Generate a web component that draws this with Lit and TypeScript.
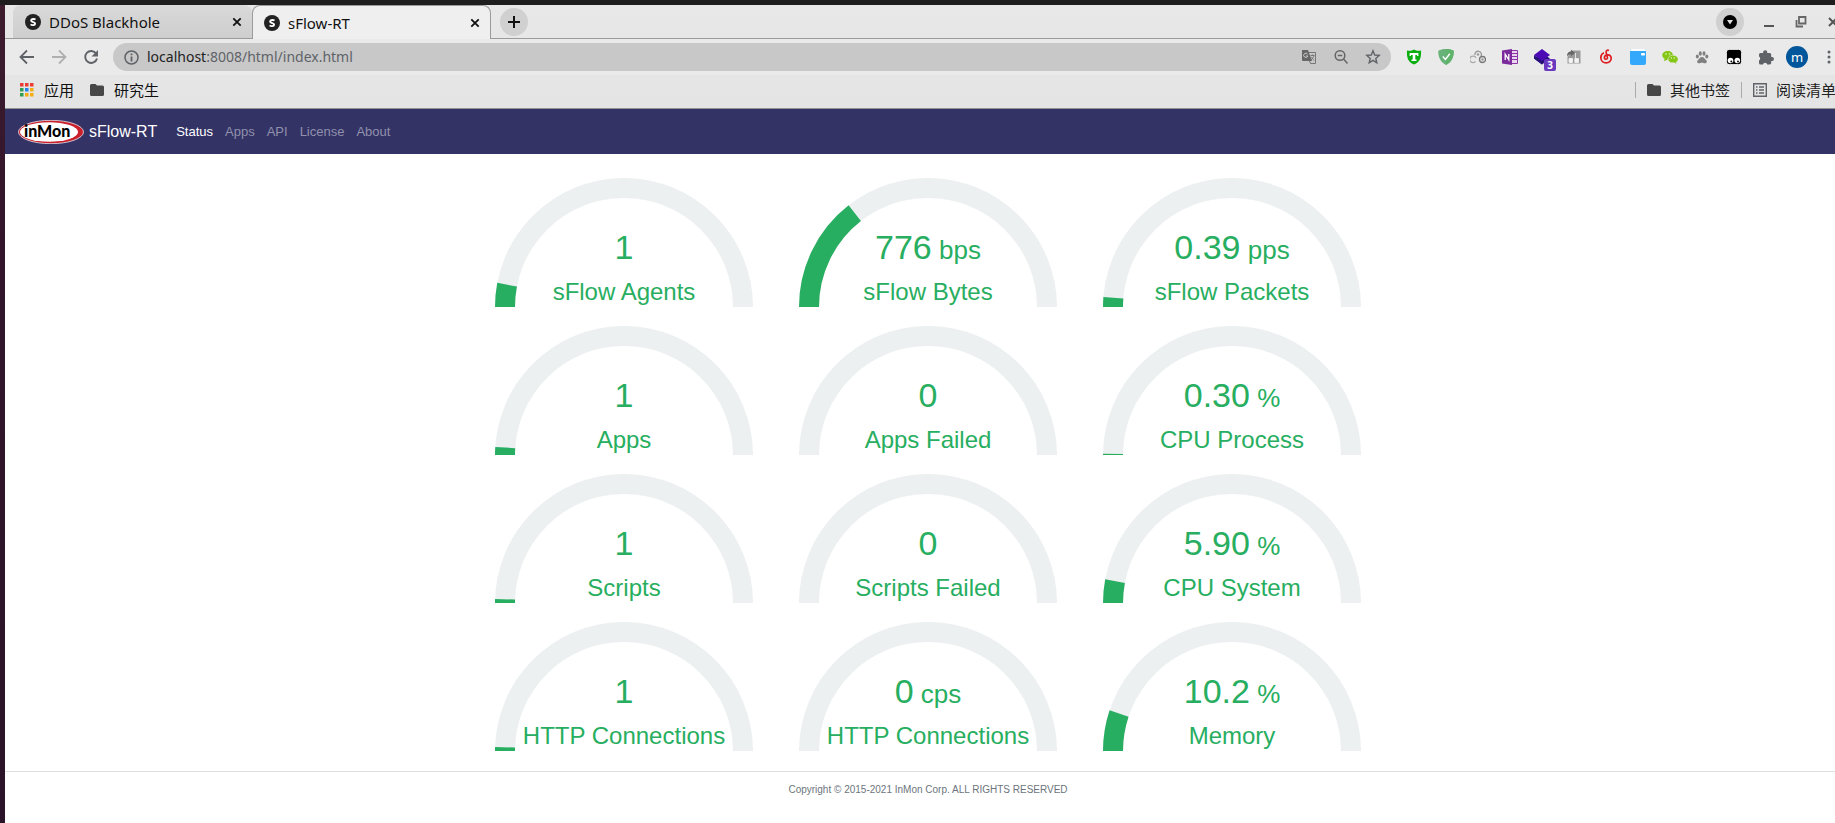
import { LitElement, html, svg, css, nothing } from "lit";
import { customElement, property } from "lit/decorators.js";

@customElement("status-gauge")
class StatusGauge extends LitElement {
  @property({ type: Number }) fraction = 0;
  @property() value = "";
  @property() unit = "";
  @property() label = "";

  static styles = css`
    :host { display: grid; color: #27ae60; text-align: center; }
    .dial { grid-area: 1 / 1; display: block; width: 100%; }
    .text { grid-area: 1 / 1; align-self: end; }
    .value { font-size: 34px; line-height: 40px; }
    .unit { font-size: 26px; line-height: 26px; white-space: pre; }
    .label { font-size: 24px; line-height: 30px; padding-top: 10px; white-space: nowrap; }
  `;

  private arc(f: number) {
    const a = Math.PI * (1 - f);
    const x = (r: number) => (129 + r * Math.cos(a)).toFixed(2);
    const y = (r: number) => (129 - r * Math.sin(a)).toFixed(2);
    return `M0 129A129 129 0 0 1 ${x(129)} ${y(129)}L${x(109)} ${y(109)}A109 109 0 0 0 20 129Z`;
  }

  render() {
    return html`
      <svg class="dial" viewBox="0 0 258 129" aria-hidden="true">
        <path d=${this.arc(1)} fill="#ecf0f1" />
        ${this.fraction > 0 ? svg`<path d=${this.arc(this.fraction)} fill="#27ae60" />` : nothing}
      </svg>
      <div class="text">
        <div class="value">${this.value}${this.unit ? html`<span class="unit"> ${this.unit}</span>` : nothing}</div>
        <div class="label">${this.label}</div>
      </div>
    `;
  }
}

const siteMark = html`<svg width="16" height="16" viewBox="0 0 16 16" aria-hidden="true">
  <circle cx="8" cy="8" r="8" fill="#222" />
  <path d="M10.4 5.6C9.6 4.7 6.2 4.5 6.1 6.5c0 2 4.1 1.2 4 3.1-.1 2-3.400 1.800-4.400.7" fill="none" stroke="#fff" stroke-width="1.900" />
</svg>`;

const closeMark = html`<svg width="10" height="10" viewBox="0 0 10 10" aria-hidden="true">
  <path d="M1.300 1.300l7.400 7.400M8.700 1.300L1.300 8.700" stroke="#111" stroke-width="1.800" />
</svg>`;

const folder = html`<svg width="14" height="14" viewBox="0 0 14 14" aria-hidden="true">
  <path d="M1.500 1h4l1.500 1.500h5.500A1.500 1.500 0 0 1 14 4v7.500a1.500 1.500 0 0 1-1.500 1.500h-11A1.500 1.500 0 0 1 0 11.500v-9A1.500 1.500 0 0 1 1.500 1z" fill="#474747" />
</svg>`;

const apps = html`<svg width="14" height="14" viewBox="0 0 14 14" aria-hidden="true">
  <path d="M0 0h3.500v3.500H0zM5 0h3.500v3.500H5zM10 0h3.500v3.500H10z" fill="#ea3c33" />
  <path d="M0 5h3.500v3.500H0zM0 10h3.500v3.500H0z" fill="#2f9e4f" />
  <path d="M5 5h3.500v3.500H5z" fill="#2383ea" />
  <path d="M10 5h3.500v3.500H10zM5 10h3.500v3.500H5zM10 10h3.500v3.500H10z" fill="#f4ad13" />
</svg>`;

const extensions = [
  { name: "T shield", art: svg`<path d="M8 .5C10 2 12.500 2 15 1.600c.4 7-.8 11.400-7 14-6.200-2.600-7.400-7-7-14C3.500 2 6 2 8 .5z" fill="#0bae0f"/><path d="M3.600 4h8.800v3H11V6H9.300v4.600h1.200V12h-5v-1.400h1.200V6H5v1H3.600z" fill="#fff"/>` },
  { name: "Ad guard", art: svg`<path d="M8 0c3 0 5.600.6 7.700 1.700C15.800 8.500 13.500 13 8 16 2.500 13 .2 8.500.3 1.700 2.400.6 5 0 8 0z" fill="#67b279"/><path d="M8 0c3 0 5.600.6 7.700 1.700C15.800 8.500 13.500 13 8 16z" fill="#5fb36a"/><path d="M4.800 7.600l2.600 2.800 4.400-5.600" fill="none" stroke="#fff" stroke-width="1.500"/>` },
  { name: "Rings", art: svg`<g fill="none" stroke-width="1.300"><path d="M4.900 6.200a3.300 3.300 0 1 1 6 1.200" stroke="#999"/><path d="M5.500 12.500A3.300 3.300 0 1 1 6 9" stroke="#aaa"/><circle cx="12.500" cy="10.500" r="3" stroke="#777"/></g><g fill="#999"><circle cx="8" cy="5.500" r="1.200"/><circle cx="12.500" cy="10.500" r="1.200"/></g>` },
  { name: "Notes", art: svg`<path d="M9 1.500h6.500v13H9z" fill="#ead7ef" stroke="#8b35a8"/><path d="M9 4.500h6M9 7.500h6M9 10.500h6" stroke="#8b35a8"/><path d="M0 1.500L10 0v16L0 14.500z" fill="#7b2a9b"/><path d="M3.200 11V5.200l3.600 5.600V5" fill="none" stroke="#fff" stroke-width="1.300"/>` },
  { name: "Layers", badge: "3", art: svg`<path d="M0 9.500l8 6 8-6-8-5z" fill="#27127c"/><path d="M0 6l8-6 8 6-8 6z" fill="#4b0ab5"/><path d="M0 6v3.500l8 6V12z" fill="#27127c"/>` },
  { name: "Library", art: svg`<path d="M5 1.500h9.500v13H1.500V8z" fill="#999"/><path d="M1 7.500C1 3.500 3 2.500 5 2.500V.8L9 4 5 7V5.200C3 5.200 2 6 1 7.500z" fill="#666"/><path d="M3 9.500h3.500v4H3zM8.800 9.500h3.700v4H8.800zM9.500 4v5" stroke="#f4f4f4" stroke-width=".8" fill="#f4f4f4"/>` },
  { name: "Music", art: svg`<path d="M11 1.500C9.400.6 7.800 1.800 8.200 3.600l1.200 4.800c.5 2.300-3.200 2.500-3 .2C6.600 5.400 12.600 4.300 13.200 9 13.600 15.300 2.900 15.800 2.800 8.800 2.800 6.200 4.200 4.500 6 3.800" fill="none" stroke="#dc2023" stroke-width="1.700"/>` },
  { name: "Window", art: svg`<path d="M0 1.500A1.500 1.500 0 0 1 1.500 0h13A1.500 1.500 0 0 1 16 1.500V14a2 2 0 0 1-2 2H2a2 2 0 0 1-2-2z" fill="#34a9fb"/><path d="M0 2V1.500A1.500 1.500 0 0 1 1.500 0h13A1.500 1.500 0 0 1 16 1.500V2z" fill="#f8fbff"/><rect x="11" y="4" width="4" height="2.500" rx="1" fill="#fff"/>` },
  { name: "Chat", art: svg`<path d="M5.700 2C9 2 11 4 11 6.300S9 10.500 5.700 10.500L2 12.200l.6-2.600C-1.800 7 .5 2 5.700 2z" fill="#85c714"/><path d="M10.600 6.200c6 0 7 5.200 3.600 7l.4 1.800-2.500-1.200C8 14.300 6 12 6.100 10c0-2 1.900-3.800 4.500-3.800z" fill="#85c714" stroke="#e6e6e6" stroke-width=".6"/><g fill="#e8f5d0"><circle cx="4" cy="5" r=".8"/><circle cx="7.500" cy="5" r=".8"/><circle cx="9.300" cy="9" r=".7"/><circle cx="12.300" cy="9" r=".7"/></g>` },
  { name: "Paw", art: svg`<g fill="#808080"><ellipse cx="3.300" cy="7.500" rx="1.500" ry="2"/><ellipse cx="6.300" cy="4.500" rx="1.500" ry="2.200"/><ellipse cx="10" cy="4.500" rx="1.500" ry="2.200"/><ellipse cx="12.800" cy="7.500" rx="1.500" ry="2"/><path d="M8 8c2 0 2.500 1.800 4 3s.8 3.300-1 3.300c-1.200 0-1.800-.6-3-.6s-1.800.6-3 .6c-1.800 0-2.500-2-1-3.300S6 8 8 8z"/></g>` },
  { name: "Scripts", art: svg`<rect x=".3" y=".3" width="15.400" height="15.400" rx="3" fill="#000" stroke="#fff"/><circle cx="4.500" cy="11.500" r="2.800" fill="#fff"/><circle cx="11.300" cy="11.500" r="2.800" fill="#fff"/><circle cx="5.300" cy="12.500" r=".9"/><circle cx="12" cy="12.500" r=".9"/>` },
  { name: "Extensions", art: svg`<path d="M1 5.500A1.500 1.500 0 0 1 2.500 4H5.200a2.100 2.100 0 1 1 4 0h2.600a1.500 1.500 0 0 1 1.400 1.500V8a2.100 2.100 0 1 1 0 4v2a1.500 1.500 0 0 1-1.400 1.500H9.300a2.300 2.300 0 0 0-4.400 0H2.500A1.500 1.500 0 0 1 1 14v-2.500a2.300 2.300 0 0 0 0-4z" fill="#5f6368"/>` },
];

const gauges = [
  { value: "1", unit: "", label: "sFlow Agents", fraction: 0.06 },
  { value: "776", unit: "bps", label: "sFlow Bytes", fraction: 0.289 },
  { value: "0.39", unit: "pps", label: "sFlow Packets", fraction: 0.025 },
  { value: "1", unit: "", label: "Apps", fraction: 0.02 },
  { value: "0", unit: "", label: "Apps Failed", fraction: 0 },
  { value: "0.30", unit: "%", label: "CPU Process", fraction: 0.003 },
  { value: "1", unit: "", label: "Scripts", fraction: 0.01 },
  { value: "0", unit: "", label: "Scripts Failed", fraction: 0 },
  { value: "5.90", unit: "%", label: "CPU System", fraction: 0.059 },
  { value: "1", unit: "", label: "HTTP Connections", fraction: 0.01 },
  { value: "0", unit: "cps", label: "HTTP Connections", fraction: 0 },
  { value: "10.2", unit: "%", label: "Memory", fraction: 0.102 },
];

@customElement("app-root")
class AppRoot extends LitElement {
  static styles = css`
    :host {
      display: block; box-sizing: border-box; min-height: 100vh; overflow: hidden;
      padding: 5px 0 0 5px; font-family: "Liberation Sans", Arial, sans-serif;
      background: linear-gradient(#1e1e1e, #1e1e1e) 0 0 / 100% 5px no-repeat, linear-gradient(#3d1c2e, #32152b 30%, #2b1429);
    }
    * { box-sizing: border-box; }
    button { border: 0; padding: 0; margin: 0; background: none; font: inherit; color: inherit; display: grid; place-items: center; flex: none; }
    a { color: inherit; text-decoration: none; }
    svg { display: block; flex: none; }
    /* The window is wider than the visible desktop and runs off its right edge. */
    .window { margin-right: -16px; min-height: calc(100vh - 5px); background: #fff; }
    .chrome { background: linear-gradient(#e8e8e8, #e4e4e4); border-bottom: 1px solid #91928f; font-family: "Noto Sans", "Noto Sans CJK SC", sans-serif; font-size: 14px; color: #111; }
    .tabs { display: flex; height: 34px; padding-left: 8px; box-shadow: inset 0 -1px #9b9b9b; font-size: 15px; }
    .tab { display: flex; align-items: center; width: 239px; padding: 0 10px 0 12px; gap: 8px; border-radius: 8px 8px 0 0; background: linear-gradient(#d9d9d9, #cecece); border-bottom: 1px solid #9b9b9b; }
    .tab.active { background: #efefef; border: 1px solid #9b9b9b; border-bottom: 0; padding: 0 10px 0 11px; }
    .tab a { flex: 1; line-height: 20px; }
    .new { width: 28px; height: 28px; border-radius: 50%; background: #d0d0d0; margin: 3px 0 0 9px; }
    .controls { display: flex; align-items: center; margin-left: auto; padding-right: 8px; }
    .menu { width: 28px; height: 28px; border-radius: 50%; background: #d0d0d0; margin-right: 19px; }
    .ctl { width: 12px; margin-right: 20px; }
    .ctl:last-child { margin-right: 4px; }
    .toolbar { display: flex; align-items: center; height: 36px; padding: 0 20px 0 14px; background: #eaeaea; }
    .nav-btn { width: 16px; margin-right: 16px; }
    .omni { flex: 1; display: flex; align-items: center; height: 28px; border-radius: 14px; background: #c8c8c8; padding: 0 10px 0 11px; margin-right: 15px; margin-left: -2px; }
    .omni svg { color: #5f6368; }
    .url { flex: 1; margin-left: 8px; display: grid; }
    .url input { grid-area: 1 / 1; width: 100%; height: 24px; padding: 0; border: 0; outline: 0; background: none; font: inherit; color: transparent; }
    .url span { grid-area: 1 / 1; line-height: 24px; color: #5f6368; pointer-events: none; }
    .url b { font-weight: 400; color: #222; }
    .omni button { width: 16px; margin-left: 16px; }
    .ext { position: relative; width: 16px; margin-right: 16px; }
    .badge { position: absolute; left: 10px; top: 10px; width: 12px; height: 12px; border-radius: 2px; background: #6b38c0; color: #fff; font-size: 10px; line-height: 12px; font-weight: 700; }
    .avatar { width: 22px; height: 22px; border-radius: 50%; background: #02569b; color: #fff; margin: 0 19px 0 -4px; font-size: 13px; line-height: 20px; }
    .bookmarks { display: flex; align-items: center; height: 33px; padding: 0 15px 4px 15px; font-size: 15px; }
    .bookmarks a { display: flex; align-items: center; gap: 10px; line-height: 22px; white-space: nowrap; margin-right: 16px; }
    .sep { width: 1px; height: 16px; background: #aaa; margin: 0 11px; }
    .bookmarks .end { margin-left: auto; }
    .bookmarks .last { margin-right: 0; color: #222; gap: 9px; }
    .navbar { display: flex; align-items: center; height: 45px; padding: 0 13px; background: #336; color: #fff; }
    .brand { display: flex; align-items: center; gap: 5px; font-size: 16px; margin-right: 19px; line-height: 24px; }
    .logo-text { font: 900 16px Lato, sans-serif; }
    .links { display: flex; gap: 12px; font-size: 13px; line-height: 20px; color: #9191ab; }
    .links .on { color: #fff; }
    .grid { display: grid; grid-template-columns: repeat(3, 258px); justify-content: center; gap: 19px 46px; padding: 24px 0 20px; }
    footer { border-top: 1px solid #dedede; padding-top: 10px; text-align: center; font-size: 10px; line-height: 15px; color: #6c757d; }
  `;

  private tab(title: string, active = false) {
    return html`<div class="tab ${active ? "active" : ""}">${siteMark}<a href="#">${title}</a><button aria-label="Close ${title}">${closeMark}</button></div>`;
  }

  render() {
    return html`
      <div class="window">
        <header class="chrome">
          <div class="tabs">
            ${this.tab("DDoS Blackhole")}${this.tab("sFlow-RT", true)}
            <button class="new" aria-label="New tab"><svg width="12" height="12"><path d="M6 0v12M0 6h12" stroke="#111" stroke-width="2" /></svg></button>
            <div class="controls">
              <button class="menu" aria-label="Search tabs"><svg width="14" height="14"><circle cx="7" cy="7" r="7" /><path d="M4 5h6l-3 4.500z" fill="#e0e0e0" /></svg></button>
              <button class="ctl" aria-label="Minimize"><svg width="12" height="12"><path d="M1 10h10" stroke="#555" stroke-width="2" /></svg></button>
              <button class="ctl" aria-label="Restore"><svg width="12" height="12" fill="none" stroke="#666" stroke-width="1.800"><path d="M4 1h6.500v6.500H4zM1.500 4v6.500H8" /></svg></button>
              <button class="ctl" aria-label="Close window"><svg width="12" height="12"><path d="M2 2l8 8M10 2l-8 8" stroke="#555" stroke-width="2" /></svg></button>
            </div>
          </div>
          <div class="toolbar">
            <button class="nav-btn" aria-label="Back"><svg width="16" height="16" fill="none" stroke="#5f6368" stroke-width="1.800"><path d="M15 8H2M8 1.500L1.500 8 8 14.500" /></svg></button>
            <button class="nav-btn" aria-label="Forward"><svg width="16" height="16" fill="none" stroke="#b0b0b0" stroke-width="1.800"><path d="M1 8h13M8 1.500L14.500 8 8 14.500" /></svg></button>
            <button class="nav-btn" aria-label="Reload"><svg width="16" height="16"><path d="M13.200 4.600A6 6 0 1 0 14 9.500" fill="none" stroke="#5f6368" stroke-width="1.900" /><path d="M15 1v6.500H8.500z" fill="#5f6368" /></svg></button>
            <div class="omni">
              <svg width="15" height="15" fill="none" stroke="currentColor" stroke-width="1.500"><circle cx="7.500" cy="7.500" r="6.500" /><path d="M7.500 6.500v5M7.500 3.500v1.800" stroke-width="1.800" /></svg>
              <label class="url"><input aria-label="Address" value="localhost:8008/html/index.html" /><span aria-hidden="true"><b>localhost</b>:8008/html/index.html</span></label>
              <button aria-label="Translate"><svg width="16" height="16"><path d="M1 1h6l4 11H2a1 1 0 0 1-1-1z" fill="#666" /><path d="M8 3.500h6.500v11H9.500L8.500 12" fill="none" stroke="#777" /><path d="M6.600 5.200A2.100 2.100 0 1 0 6.800 7H5" fill="none" stroke="#ccc" /><path d="M9.500 6.500h4M11.500 5.500v1M10 11c2-1.500 2.500-3 2.800-4.500M10.500 8c.5 1.500 1.500 2.500 2.800 3.500" fill="none" stroke="#777" /></svg></button>
              <button aria-label="Zoom"><svg width="16" height="16" fill="none" stroke="#666" stroke-width="1.500"><circle cx="7" cy="6.500" r="4.800" /><path d="M4.700 6.500h4.600M10.500 10l4 4.500" /></svg></button>
              <button aria-label="Bookmark this page"><svg width="16" height="16" fill="none" stroke="#5f6368" stroke-width="1.400"><path d="M8 1.800l1.700 4.200 4.500.4-3.400 3 1 4.400L8 11.400l-3.800 2.400 1-4.400-3.400-3 4.500-.4z" /></svg></button>
            </div>
            ${extensions.map((e) => html`<button class="ext" aria-label=${e.name}><svg width="16" height="16" viewBox="0 0 16 16">${e.art}</svg>${e.badge ? html`<span class="badge">${e.badge}</span>` : nothing}</button>`)}
            <button class="avatar" aria-label="Profile">m</button>
            <button aria-label="Menu"><svg width="4" height="14" fill="#5f6368"><circle cx="2" cy="2" r="1.500" /><circle cx="2" cy="7" r="1.500" /><circle cx="2" cy="12" r="1.500" /></svg></button>
          </div>
          <nav class="bookmarks" aria-label="Bookmarks">
            <a href="#">${apps}应用</a>
            <a href="#">${folder}研究生</a>
            <span class="sep end"></span>
            <a class="last" href="#">${folder}<span>其他书签</span></a>
            <span class="sep"></span>
            <a class="last" href="#"><svg width="14" height="14" fill="none" stroke="#5f6368" stroke-width="1.400"><path d="M.7.700h12.600v12.600H.7zM3 4h1.500M6 4h5M3 7h1.500M6 7h5M3 10h1.500M6 10h5" /></svg>阅读清单</a>
          </nav>
        </header>
        <nav class="navbar" aria-label="Main">
          <a class="brand" href="#">
            <svg width="66" height="24" viewBox="0 0 66 24" role="img" aria-label="inMon">
              <ellipse cx="33" cy="12" rx="32.500" ry="11.700" fill="#c9202b" stroke="#e9e4ee" stroke-width=".8" />
              <ellipse cx="31" cy="12" rx="29" ry="9.800" fill="#fff" />
              <text class="logo-text" x="6" y="17" fill="#000">inMon</text>
            </svg>
            sFlow-RT
          </a>
          <div class="links">
            <a class="on" href="#" aria-current="page">Status</a><a href="#">Apps</a><a href="#">API</a><a href="#">License</a><a href="#">About</a>
          </div>
        </nav>
        <main class="grid">
          ${gauges.map((g) => html`<status-gauge .value=${g.value} .unit=${g.unit} .label=${g.label} .fraction=${g.fraction}></status-gauge>`)}
        </main>
        <footer>Copyright © 2015-2021 InMon Corp. ALL RIGHTS RESERVED</footer>
      </div>
    `;
  }
}
